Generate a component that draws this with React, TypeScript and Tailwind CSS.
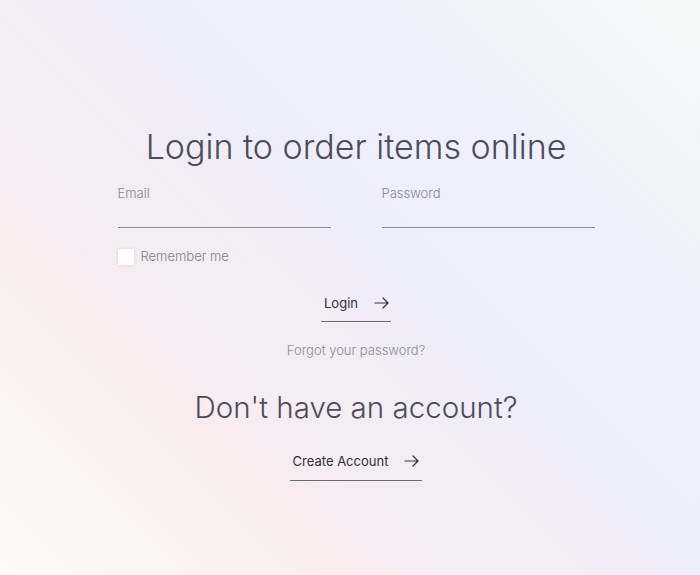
import { useState } from "react";

const Arrow = () => (
  <svg width="15" height="12" viewBox="0 0 15 12" fill="none" stroke="currentColor" strokeWidth="1.2" strokeLinecap="round" strokeLinejoin="round">
    <path d="M1 6h13M9 1l5 5-5 5" />
  </svg>
);

export default function App() {
  const [email, setEmail] = useState("");
  const [password, setPassword] = useState("");
  const [remember, setRemember] = useState(false);

  return (
    <div
      className="h-[575px] w-full pl-3 flex flex-col items-center bg-[linear-gradient(45deg,#fff9f7_0%,#f8ecef_28%,#eeedfa_55%,#eff0fb_75%,#f1fbf6_100%)] text-[#4a4a58]"
      style={{ fontFamily: "Inter, 'Noto Sans', sans-serif" }}
    >
      <h1 className="mt-[126px] text-[34px] leading-[41px] font-light text-[#4b4b5b]">
        Login to order items online
      </h1>

      <form className="w-[477px] mt-[18px]" onSubmit={(e) => e.preventDefault()}>
        <div className="flex justify-between">
          <label className="w-[213px] block">
            <span className="block text-[13px] leading-4 font-light text-[#85858f]">Email</span>
            <input
              type="email"
              value={email}
              onChange={(e) => setEmail(e.target.value)}
              className="w-full h-[27px] bg-transparent border-b border-[#8a8a95] outline-none"
            />
          </label>
          <label className="w-[213px] block">
            <span className="block text-[13px] leading-4 font-light text-[#85858f]">Password</span>
            <input
              type="password"
              value={password}
              onChange={(e) => setPassword(e.target.value)}
              className="w-full h-[27px] bg-transparent border-b border-[#8a8a95] outline-none"
            />
          </label>
        </div>

        <label className="mt-[19px] flex items-center gap-[7px] cursor-pointer">
          <span
            onClick={() => setRemember(!remember)}
            className="w-4 h-4 bg-white shadow-[0_0_3px_rgba(0,0,0,0.12)] flex items-center justify-center text-[10px]"
          >
            {remember ? "✓" : ""}
          </span>
          <span className="text-[13px] font-light text-[#80808a]">Remember me</span>
        </label>

        <div className="flex flex-col items-center mt-[27px]">
          <button type="submit" className="flex items-center gap-4 pl-[3px] pr-[2px] pb-[8px] border-b border-[#6a6a75] text-[13px] text-[#2f2f3a]">
            Login <Arrow />
          </button>
          <a href="#" className="mt-[19px] text-[13px] font-light text-[#8a8a95]">
            Forgot your password?
          </a>
        </div>
      </form>

      <h2 className="mt-[28px] text-[29.5px] leading-9 font-light text-[#4b4b5b]">
        Don't have an account?
      </h2>

      <button className="mt-[27px] flex items-center gap-4 px-[3px] pb-[9px] border-b border-[#6a6a75] text-[13px] text-[#2f2f3a]">
        Create Account <Arrow />
      </button>
    </div>
  );
}
